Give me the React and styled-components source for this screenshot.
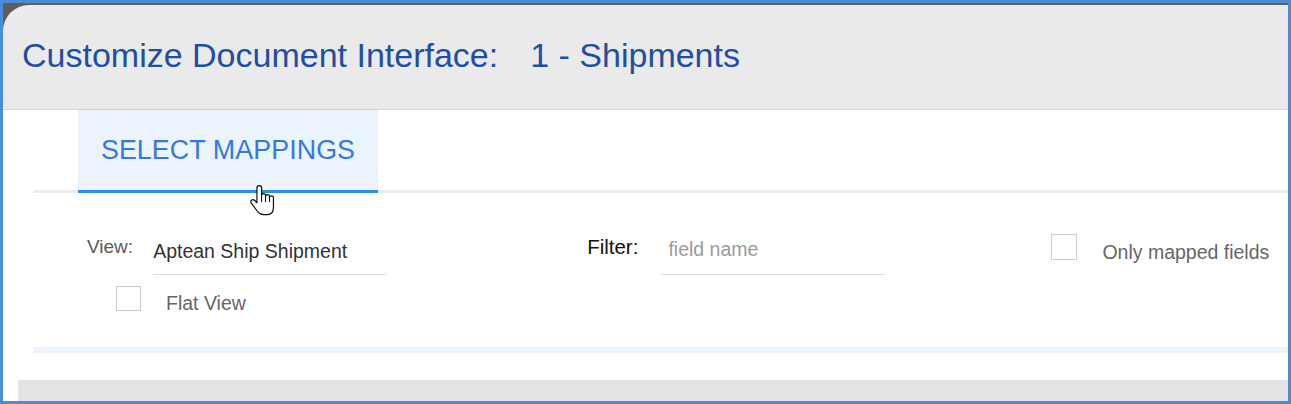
import React from 'react'
import styled, { createGlobalStyle } from 'styled-components'

const GlobalStyle = createGlobalStyle`
  html, body {
    margin: 0;
    padding: 0;
    background: #ffffff;
  }
  body {
    font-family: 'Liberation Sans', Arial, sans-serif;
  }
`

const Frame = styled.div`
  position: relative;
  box-sizing: border-box;
  width: 1291px;
  height: 404px;
  border: 3px solid #4f8ad6;
  padding-top: 2px;
  background: #5e5e5e;
  display: flex;
  flex-direction: column;
  overflow: hidden;
`

const Header = styled.header`
  flex: none;
  box-sizing: border-box;
  height: 105px;
  padding: 0 0 4px 19px;
  background: #eaeaea;
  border-bottom: 1px solid #d3d3d3;
  border-top-left-radius: 26px;
  display: flex;
  align-items: center;
`

const Title = styled.h1`
  margin: 0;
  font-size: 34px;
  font-weight: 400;
  color: #1f4ea6;
  white-space: nowrap;
`

const DocName = styled.span`
  margin-left: 32px;
`

const Body = styled.main`
  flex: 1;
  background: #ffffff;
  display: flex;
  flex-direction: column;
`

const TabBar = styled.nav`
  margin-left: 30px;
  padding-left: 45px;
  border-bottom: 3px solid #ececec;
  display: flex;
`

const Tab = styled.div`
  box-sizing: border-box;
  width: 300px;
  height: 83px;
  margin-bottom: -3px;
  background: ${({ active }) => (active ? '#ebf3fd' : 'transparent')};
  border-bottom: 3px solid ${({ active }) => (active ? '#2a8fe6' : 'transparent')};
  display: flex;
  align-items: center;
  justify-content: center;
  font-size: 26.8px;
  color: #3578e5;
  letter-spacing: 0.1px;
`

const Filters = styled.section`
  height: 154px;
  box-sizing: border-box;
  padding-top: 35px;
  display: flex;
  flex-direction: column;
`

const Row = styled.div`
  display: flex;
  align-items: flex-start;
  padding-left: ${({ indent }) => indent}px;
  margin-top: ${({ top }) => top || 0}px;
`

const Label = styled.label`
  font-size: ${({ size }) => size || 19}px;
  line-height: 37px;
  color: ${({ color }) => color || '#5a5a5a'};
  margin-left: ${({ gapBefore }) => gapBefore || 0}px;
  margin-right: ${({ gapAfter }) => gapAfter || 0}px;
  white-space: nowrap;
`

const Field = styled.div`
  box-sizing: border-box;
  width: ${({ width }) => width}px;
  height: 47px;
  padding-bottom: ${({ lift }) => lift || 0}px;
  border-bottom: 1px solid #dcdcdc;
  display: flex;
  align-items: center;
  font-size: 19.5px;
  color: ${({ placeholder }) => (placeholder ? '#9b9b9b' : '#333333')};
  white-space: nowrap;
`

const FieldText = styled.span`
  padding-left: ${({ inset }) => inset || 0}px;
`

const CheckBox = styled.span`
  box-sizing: border-box;
  display: block;
  flex: none;
  width: ${({ size }) => size}px;
  height: ${({ size }) => size}px;
  margin-top: ${({ top }) => top || 0}px;
  margin-left: ${({ gapBefore }) => gapBefore || 0}px;
  border: 1px solid #cacaca;
  background: #ffffff;
`

const CheckLabel = styled.span`
  font-size: 19.5px;
  line-height: ${({ lh }) => lh}px;
  color: #666666;
  margin-left: 25px;
  white-space: nowrap;
`

const Band = styled.div`
  height: 6px;
  margin-left: 30px;
  background: #edf4fd;
`

const Footer = styled.div`
  height: 21px;
  margin-top: 27px;
  margin-left: 15px;
  background: #e3e3e3;
`

const Pointer = styled.svg`
  position: absolute;
  left: 246px;
  top: 181px;
  width: 28px;
  height: 33px;
`

const HandCursor = () => (
  <Pointer viewBox="0 0 24 30">
    <path
      d="M8.55 1.5c-1.13 0-2.05.92-2.05 2.05V17l-2.2-2.2c-.8-.8-2.1-.8-2.8 0-.7.7-.7 1.8-.1 2.6l5.6 7.6c1.3 1.8 3.4 2.9 5.6 2.9h3.4c3.7 0 5.5-3 5.5-6.7v-8.7c0-1-.8-1.8-1.8-1.8s-1.8.8-1.8 1.8v-1c0-1-.8-1.8-1.8-1.8s-1.8.8-1.8 1.8v-1c0-1-.8-1.8-1.8-1.8s-1.8.8-1.8 1.8V3.55c0-1.13-.92-2.05-2.05-2.05z"
      fill="#ffffff"
      stroke="#111111"
      strokeWidth="1.1"
      strokeLinejoin="round"
    />
    <path
      d="M10.7 10.5v5.5M14.3 11.5v4.5M17.9 12.5v3.5"
      stroke="#111111"
      strokeWidth="1"
      strokeLinecap="round"
    />
  </Pointer>
)

export default function App() {
  return (
    <>
      <GlobalStyle />
      <Frame>
        <Header>
          <Title>
            Customize Document Interface:<DocName>1 - Shipments</DocName>
          </Title>
        </Header>
        <Body>
          <TabBar>
            <Tab active>SELECT MAPPINGS</Tab>
          </TabBar>
          <Filters>
            <Row indent={84}>
              <Label gapAfter={20}>View:</Label>
              <Field width={233}>
                <FieldText>Aptean Ship Shipment</FieldText>
              </Field>
              <Label size={20.5} color="#111111" gapBefore={201} gapAfter={23}>
                Filter:
              </Label>
              <Field width={224} placeholder lift={3}>
                <FieldText inset={7}>field name</FieldText>
              </Field>
              <CheckBox size={26} top={6} gapBefore={166} />
              <CheckLabel lh={48}>Only mapped fields</CheckLabel>
            </Row>
            <Row indent={113} top={10}>
              <CheckBox size={25} />
              <CheckLabel lh={35}>Flat View</CheckLabel>
            </Row>
          </Filters>
          <Band />
          <Footer />
        </Body>
        <HandCursor />
      </Frame>
    </>
  )
}
